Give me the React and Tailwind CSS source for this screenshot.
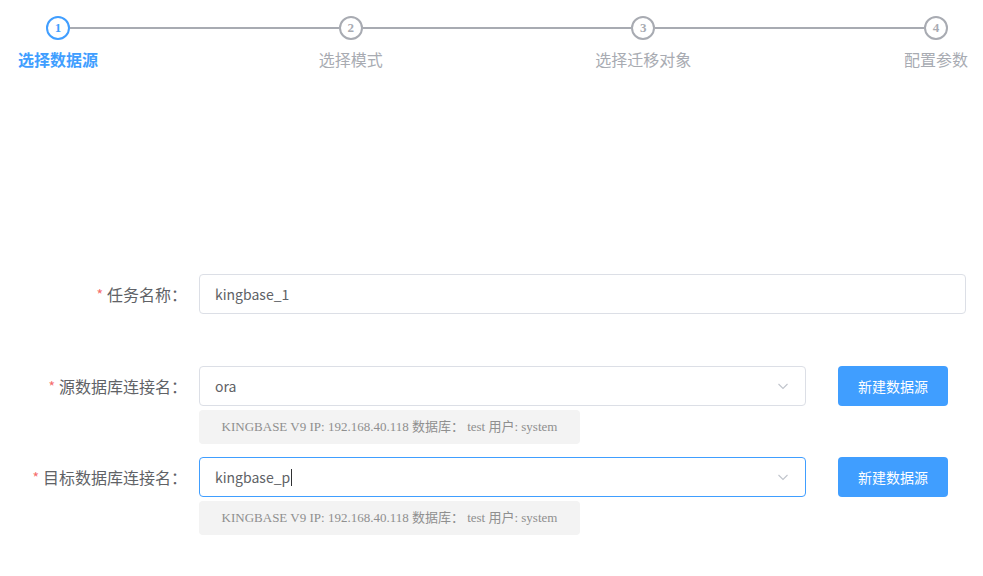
import React from "react";

const steps = ["选择数据源", "选择模式", "选择迁移对象", "配置参数"];

const cjk = { fontFamily: '"Noto Sans CJK SC", "Noto Sans", sans-serif' };
const serif = { fontFamily: '"Liberation Serif", "Noto Sans CJK SC", serif' };

function Chevron() {
  return (
    <svg width="14" height="14" viewBox="0 0 14 14" fill="none" className="text-[#c0c4cc]">
      <path d="M2.5 5 L7 9.5 L11.5 5" stroke="currentColor" strokeWidth="1.1" />
    </svg>
  );
}

function Steps() {
  return (
    <div className="flex items-start pl-[46px] pr-[35px] pt-[16px]">
      {steps.map((s, i) => (
        <React.Fragment key={s}>
          <div className="flex w-[24px] flex-col items-center">
            <div
              className={
                "flex h-[24px] w-[24px] items-center justify-center rounded-full border-2 bg-white text-[13px] font-bold " +
                (i === 0 ? "border-[#409eff] text-[#409eff]" : "border-[#a8abb2] text-[#a8abb2]")
              }
              style={serif}
            >
              {i + 1}
            </div>
            <div
              className={
                "mt-[8px] whitespace-nowrap text-[16px] leading-[22px] " +
                (i === 0 ? "font-bold text-[#409eff]" : "text-[#a8abb2]")
              }
              style={cjk}
            >
              {s}
            </div>
          </div>
          {i < steps.length - 1 && <div className="mt-[11px] h-[2px] flex-1 bg-[#a8abb2]" />}
        </React.Fragment>
      ))}
    </div>
  );
}

function Label({ children }) {
  return (
    <div className="flex h-[40px] w-[199px] shrink-0 items-center justify-end pr-[12px] text-[16px] text-[#606266]" style={cjk}>
      <span className="mr-[4px] text-[14px] text-[#f56c6c]">*</span>
      {children}
    </div>
  );
}

function Info() {
  return (
    <div
      className="mt-[4px] flex h-[34px] w-[381px] items-center justify-center rounded-[4px] bg-[#f3f3f3] text-[13px] text-[#8f8f8f]"
      style={serif}
    >
      KINGBASE V9 IP: 192.168.40.118 数据库： test 用户: system
    </div>
  );
}

function SelectRow({ label, value, focused }) {
  return (
    <div className="flex">
      <Label>{label}</Label>
      <div>
        <div className="flex items-center">
          <div
            className={
              "flex h-[40px] w-[607px] items-center justify-between rounded-[4px] border bg-white pl-[15px] pr-[15px] text-[14px] text-[#606266] " +
              (focused ? "border-[#409eff]" : "border-[#dcdfe6]")
            }
            style={cjk}
          >
            <span className="flex items-center">
              {value}
              {focused && <span className="ml-[1px] inline-block h-[17px] w-[1px] bg-[#303133]" />}
            </span>
            <Chevron />
          </div>
          <button
            className="ml-[32px] h-[40px] w-[110px] rounded-[4px] bg-[#409eff] text-[14px] text-white"
            style={cjk}
          >
            新建数据源
          </button>
        </div>
        <Info />
      </div>
    </div>
  );
}

export default function App() {
  return (
    <div className="h-[576px] w-[983px] overflow-hidden bg-white">
      <Steps />
      <div className="mt-[204px] flex flex-col">
        <div className="flex pr-[17px]">
          <Label>任务名称：</Label>
          <div
            className="flex h-[40px] flex-1 items-center rounded-[4px] border border-[#dcdfe6] pl-[15px] text-[14px] text-[#606266]"
            style={cjk}
          >
            kingbase_1
          </div>
        </div>
        <div className="mt-[52px]">
          <SelectRow label="源数据库连接名：" value="ora" />
        </div>
        <div className="mt-[13px]">
          <SelectRow label="目标数据库连接名：" value="kingbase_p" focused />
        </div>
      </div>
    </div>
  );
}
